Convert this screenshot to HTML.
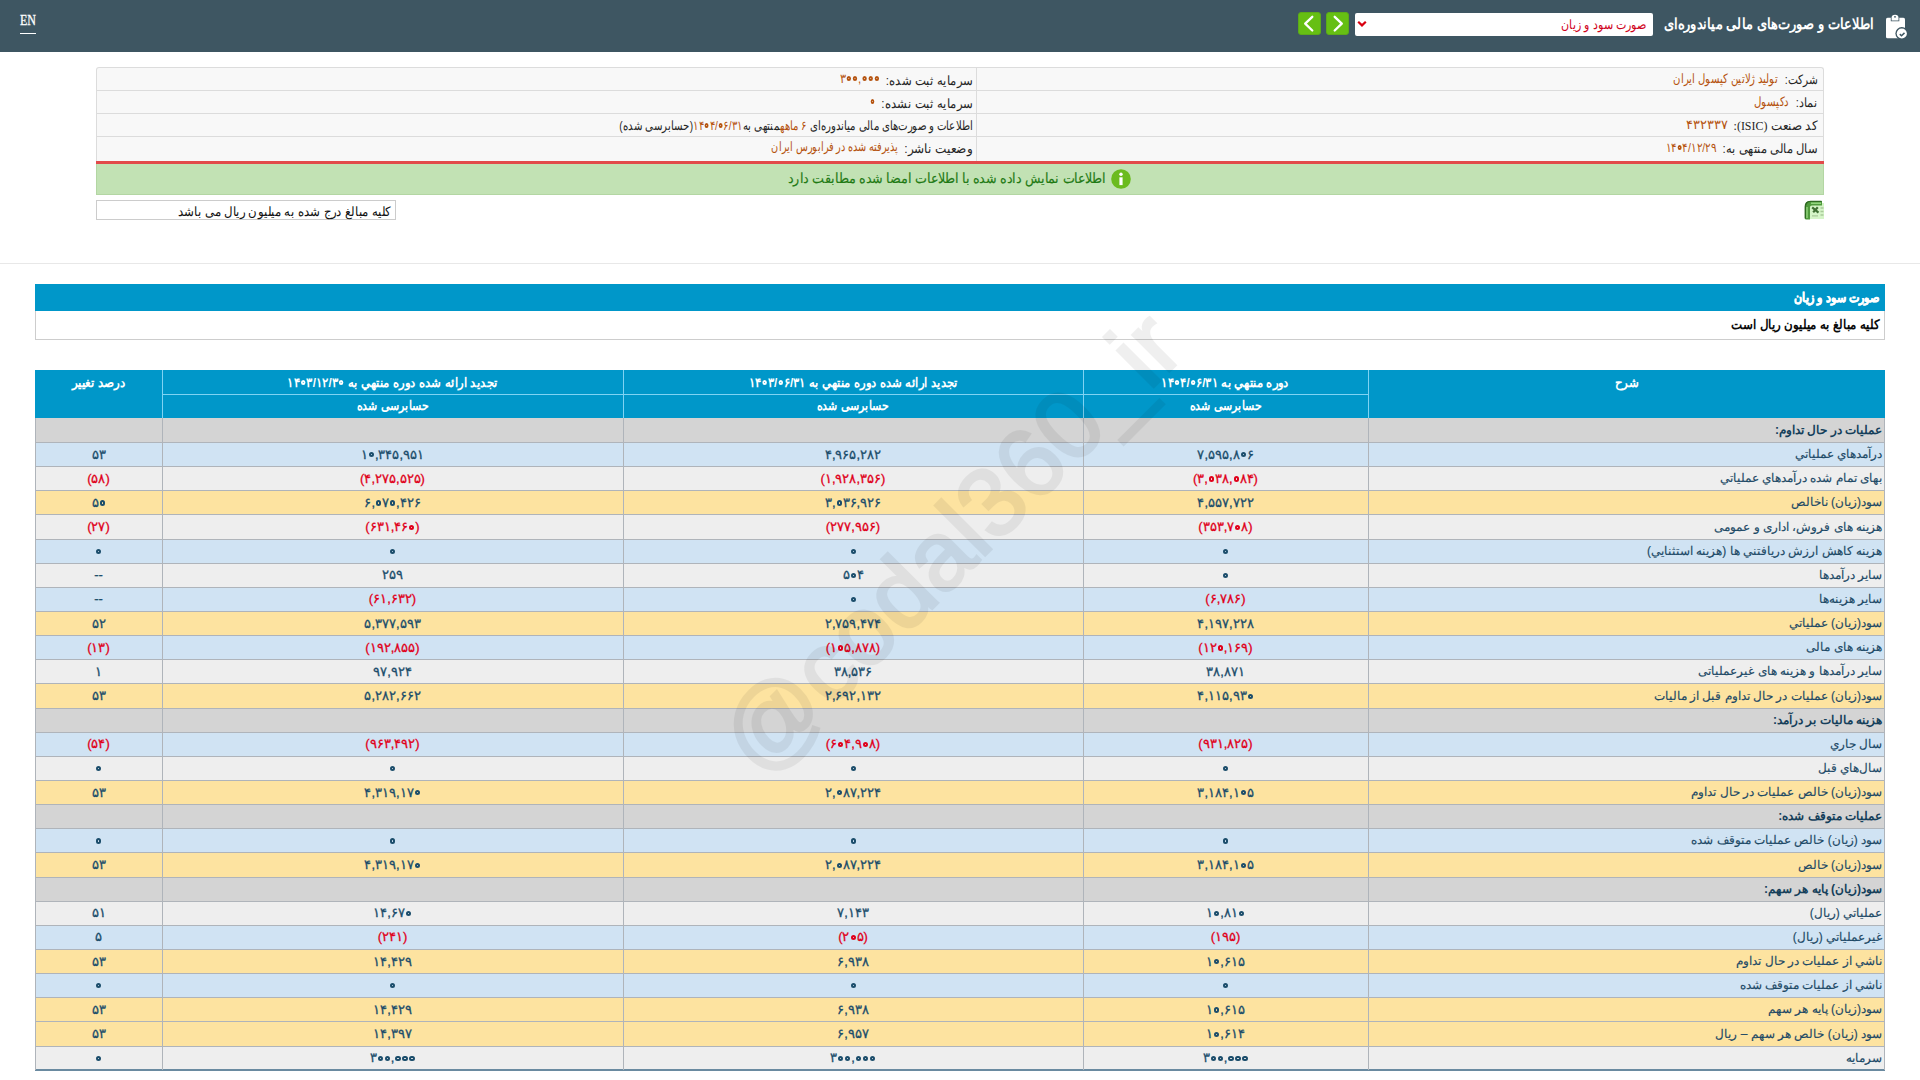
<!DOCTYPE html>
<html lang="fa" dir="rtl">
<head>
<meta charset="utf-8">
<style>
*{box-sizing:border-box;margin:0;padding:0}
html,body{width:1920px;height:1080px;overflow:hidden;background:#fff}
body{font-family:"Liberation Sans",sans-serif;font-size:12px;color:#333;position:relative}
.a{position:absolute}
.f{display:inline-block;white-space:nowrap}
.tr{position:absolute;white-space:nowrap;text-align:right}
.tr .f{transform-origin:100% 50%}
.tc{position:absolute;white-space:nowrap;text-align:center}
.tc .f{transform-origin:50% 50%}
.tl{position:absolute;white-space:nowrap;text-align:left;direction:ltr}
.tl .f{transform-origin:0 50%}
.v{color:#b5530f}
.row{position:absolute;left:35px;width:1850px}
.hl{position:absolute;left:35px;width:1850px;height:1px;background:#afb4ba}
.vl{position:absolute;width:1px;background:#afb4ba}
.num{color:#1b4d6b;font-size:13px;line-height:16px;-webkit-text-stroke:0.3px #1b4d6b}
.nb{unicode-bidi:isolate-override;direction:ltr}
.z{display:inline-block;width:7px;height:16px;position:relative;vertical-align:top}
.z:after{content:"";position:absolute;left:1px;top:5.6px;width:5.2px;height:5.2px;border:2.1px solid currentColor;border-radius:50%;box-sizing:border-box}
.neg{color:#e0001a;-webkit-text-stroke-color:#e0001a}
.desc{color:#1d4a66;font-size:12px;line-height:16px;-webkit-text-stroke:0.15px #1d4a66}
.sec{color:#153f5a;font-weight:bold;-webkit-text-stroke:0}
</style>
</head>
<body>

<div class="a" style="left:0;top:0;width:1920px;height:52px;background:#3e5662"></div>
<div class="tl" style="left:20px;top:13px;font-family:'Liberation Serif',serif;font-size:14px;line-height:16px;color:#fff;-webkit-text-stroke:0.3px #fff"><span class="f " id="f0" style=";transform:scaleX(0.8569)">EN</span></div>
<div class="a" style="left:20px;top:33px;width:16px;height:1px;background:#fff"></div>
<div class="tr" style="right:46px;top:15px;font-size:15px;line-height:18px;color:#fff;font-weight:bold"><span class="f " id="f1" style=";transform:scaleX(0.8654)">اطلاعات و صورت‌های مالی میاندوره‌ای</span></div>
<svg class="a" style="left:1880px;top:10px" width="30" height="32" viewBox="0 0 30 32">
<rect x="6" y="7.7" width="19" height="20.6" rx="1.6" fill="#fff"/>
<path d="M10.8 11.2V7.5a4.2 3.6 0 0 1 8.5 0v3.7z" fill="#3e5662"/>
<path d="M11.6 10.4V7.6a3.4 2.9 0 0 1 6.9 0v2.8z" fill="#fff"/>
<circle cx="15" cy="6.8" r="0.9" fill="#3e5662"/>
<circle cx="21.8" cy="23.5" r="6.4" fill="#3e5662"/>
<circle cx="21.8" cy="23.5" r="5.1" fill="#fff"/>
<path d="M19.8 24.1l1.7 1.6 3-2.8" stroke="#3e5662" stroke-width="1.5" fill="none"/></svg>
<div class="a" style="left:1355px;top:13px;width:298px;height:23px;background:#fff;border-radius:2px"></div>
<div class="tr" style="right:273px;top:16px;font-size:13px;line-height:17px;color:#d0021b"><span class="f " id="f2" style=";transform:scaleX(0.8528)">صورت سود و زیان</span></div>
<svg class="a" style="left:1357px;top:20px" width="10" height="8" viewBox="0 0 10 8"><path d="M1.2 1.8l3.8 3.6 3.8-3.6" stroke="#d8000f" stroke-width="2.2" fill="none"/></svg>
<div class="a" style="left:1298px;top:12px;width:23px;height:23px;background:#66bf13;border-radius:3px;border:1px solid #5cab18"><svg width="23" height="23" viewBox="0 0 23 23" style="position:absolute;left:-1px;top:-1px"><path d="M14.3 4.8L7.2 11.6l7.1 6.9" stroke="#fff" stroke-width="2.3" fill="none" stroke-linecap="round" stroke-linejoin="round"/></svg></div>
<div class="a" style="left:1326px;top:12px;width:23px;height:23px;background:#66bf13;border-radius:3px;border:1px solid #5cab18"><svg width="23" height="23" viewBox="0 0 23 23" style="position:absolute;left:-1px;top:-1px"><path d="M8.7 4.8l7.1 6.8-7.1 6.9" stroke="#fff" stroke-width="2.3" fill="none" stroke-linecap="round" stroke-linejoin="round"/></svg></div>
<div class="a" style="left:96px;top:67px;width:1728px;height:94px;background:#f8f8f8;border:1px solid #dcdcdc;border-bottom:none;border-radius:3px 3px 0 0"></div>
<div class="a" style="left:97px;top:90px;width:1726px;height:1px;background:#dcdcdc"></div>
<div class="a" style="left:97px;top:113px;width:1726px;height:1px;background:#dcdcdc"></div>
<div class="a" style="left:97px;top:136px;width:1726px;height:1px;background:#dcdcdc"></div>
<div class="a" style="left:976px;top:68px;width:1px;height:93px;background:#dcdcdc"></div>
<div class="tr" style="right:102.5px;top:71px;font-size:13px;line-height:18px;color:#262626"><span class="f " id="f3" style=";transform:scaleX(0.8123)">شرکت:</span></div>
<div class="tr v" style="right:142.0px;top:70px;font-size:13px;line-height:18px"><span class="f " id="f4" style=";transform:scaleX(0.7787)">تولید ژلاتین کپسول ایران</span></div>
<div class="tr" style="right:102.5px;top:94px;font-size:13px;line-height:18px;color:#262626"><span class="f " id="f5" style=";transform:scaleX(0.8585)">نماد:</span></div>
<div class="tr v" style="right:131.0px;top:93px;font-size:13px;line-height:18px"><span class="f " id="f6" style=";transform:scaleX(0.7864)">دکپسول</span></div>
<div class="tr" style="right:102.5px;top:117px;font-size:13px;line-height:18px;color:#262626"><span class="f " id="f7" style=";transform:scaleX(0.9166)">کد صنعت <span style="font-family:Liberation Serif,serif">(ISIC):</span></span></div>
<div class="tr v" style="right:192.5px;top:116px;font-size:13px;line-height:18px"><span class="f " id="f8" style=";transform:scaleX(0.9905)"><span class="nb">۴۳۲۳۳۷</span></span></div>
<div class="tr" style="right:102.5px;top:140px;font-size:13px;line-height:18px;color:#262626"><span class="f " id="f9" style=";transform:scaleX(0.8841)">سال مالی منتهی به:</span></div>
<div class="tr v" style="right:204.0px;top:139px;font-size:13px;line-height:18px"><span class="f " id="f10" style=";transform:scaleX(0.8002)"><span class="nb">۱۴<i class="z"></i>۴/۱۲/۲۹</span></span></div>
<div class="tr" style="right:947.5px;top:72px;font-size:13px;line-height:18px;color:#262626"><span class="f " id="f11" style=";transform:scaleX(0.8984)">سرمایه ثبت شده:</span></div>
<div class="tr v" style="right:1040.5px;top:70px;font-size:13px;line-height:18px"><span class="f " id="f12" style=";transform:scaleX(0.8767)"><span class="nb">۳<i class="z"></i><i class="z"></i>,<i class="z"></i><i class="z"></i><i class="z"></i></span></span></div>
<div class="tr" style="right:947.5px;top:95px;font-size:13px;line-height:18px;color:#262626"><span class="f " id="f13" style=";transform:scaleX(0.8984)">سرمایه ثبت نشده:</span></div>
<div class="tr v" style="right:1045.0px;top:93px;font-size:13px;line-height:18px"><span class="f " id="f14" style=";transform:scaleX(0.7143)"><span class="nb"><i class="z"></i></span></span></div>
<div class="tr" style="right:947.5px;top:140px;font-size:13px;line-height:18px;color:#262626"><span class="f " id="f15" style=";transform:scaleX(0.9285)">وضعیت ناشر:</span></div>
<div class="tr v" style="right:1021.5px;top:138px;font-size:13px;line-height:18px"><span class="f " id="f16" style=";transform:scaleX(0.7495)">پذیرفته شده در فرابورس ایران</span></div>
<div class="tr" style="right:947.5px;top:117px;font-size:13px;line-height:18px;color:#262626"><span class="f " id="f17" style=";transform:scaleX(0.7824)">اطلاعات و صورت‌های مالی میاندوره‌ای <span class="v"><span class="nb">۶</span> ماهه</span>منتهی به<span class="v"><span class="nb">۱۴<i class="z"></i>۴/<i class="z"></i>۶/۳۱</span></span>(حسابرسی شده)</span></div>
<div class="a" style="left:96px;top:161px;width:1728px;height:3px;background:#e24a4a"></div>
<div class="a" style="left:96px;top:164px;width:1728px;height:31px;background:#c2e2b4;border:1px solid #b3d6a3;border-top:none"></div>
<svg class="a" style="left:1111px;top:169px" width="20" height="20" viewBox="0 0 20 20"><circle cx="10" cy="10" r="9.8" fill="#6bbb1e"/><circle cx="10" cy="5.3" r="1.7" fill="#fff"/><path d="M8.4 8.3h3.2v7.8H8.4z" fill="#fff"/></svg>
<div class="tr" style="right:814px;top:169px;font-size:14px;line-height:18px;color:#1f7a14;-webkit-text-stroke:0.15px #1f7a14"><span class="f " id="f18" style=";transform:scaleX(0.9059)">اطلاعات نمایش داده شده با اطلاعات امضا شده مطابقت دارد</span></div>
<div class="a" style="left:96px;top:200px;width:300px;height:20px;background:#fff;border:1px solid #cccccc"></div>
<div class="tr" style="right:1529.5px;top:203.5px;font-size:13px;line-height:16px;color:#111"><span class="f " id="f19" style=";transform:scaleX(0.9067)">کلیه مبالغ درج شده به میلیون ریال می باشد</span></div>
<svg class="a" style="left:1804px;top:200px" width="20" height="20" viewBox="0 0 20 20">
<rect x="3" y="3" width="17" height="16" fill="#d6f5c8"/>
<path d="M1 19V6.5C1 3 3 1 6.5 1H18v4.5H8C6.8 5.5 6 6.3 6 7.5V19.5H2.5C1.5 19.5 1 19 1 19z" fill="#4f9a3c"/>
<path d="M1.3 18.5V6.8C1.3 3.6 3.2 1.4 6.5 1.4H17.5" stroke="#2f6a22" stroke-width="1.4" fill="none"/>
<path d="M3 7v11" stroke="#8fd27a" stroke-width="1.5"/><path d="M7 3.2h10" stroke="#9fe08a" stroke-width="1.3"/>
<path d="M8.2 7.4l6.3 5.2M13.8 7.2l-4.6 5" stroke="#3f6f33" stroke-width="2.2"/>
<path d="M16.5 8h3M16.5 11.5h3M16.5 15h3M8 15.8h6" stroke="#a9c99a" stroke-width="1.3"/>
</svg>
<div class="a" style="left:0;top:263px;width:1920px;height:1px;background:#e8e8e8"></div>
<div class="a" style="left:35px;top:284px;width:1850px;height:27px;background:#0097c9"></div>
<div class="a" style="left:35px;top:311px;width:1850px;height:29px;background:#fff;border:1px solid #cdcdcd;border-top:none"></div>
<div class="tr" style="right:40px;top:290px;font-size:13px;line-height:16px;color:#fff;font-weight:bold;-webkit-text-stroke:0.5px #fff"><span class="f " id="f20" style=";transform:scaleX(0.8528)">صورت سود و زیان</span></div>
<div class="tr" style="right:41px;top:317px;font-size:13px;line-height:16px;color:#0a0a0a;font-weight:bold"><span class="f " id="f21" style=";transform:scaleX(0.9076)">کلیه مبالغ به میلیون ریال است</span></div>
<div class="a" style="left:35px;top:370px;width:1850px;height:48px;background:#0097c9"></div>
<div class="a" style="left:163px;top:394px;width:1205px;height:1px;background:#7fd3f3"></div>
<div class="a" style="left:162px;top:370px;width:1px;height:48px;background:#7fd3f3"></div>
<div class="a" style="left:623px;top:370px;width:1px;height:48px;background:#7fd3f3"></div>
<div class="a" style="left:1083px;top:370px;width:1px;height:48px;background:#7fd3f3"></div>
<div class="a" style="left:1368px;top:370px;width:1px;height:48px;background:#7fd3f3"></div>
<div class="tc" style="left:1368px;width:517px;top:374.5px;font-size:13px;line-height:16px;color:#fff;font-weight:bold"><span class="f " id="f22" style=";transform:scaleX(0.9038)">شرح</span></div>
<div class="tc" style="left:1083px;width:285px;top:374.5px;font-size:13px;line-height:16px;color:#fff;font-weight:bold"><span class="f " id="f23" style=";transform:scaleX(0.8973)">دوره منتهي به <span class="nb">۱۴<i class="z"></i>۴/<i class="z"></i>۶/۳۱</span></span></div>
<div class="tc" style="left:623px;width:460px;top:374.5px;font-size:13px;line-height:16px;color:#fff;font-weight:bold"><span class="f " id="f24" style=";transform:scaleX(0.8973)">تجديد ارائه شده دوره منتهي به <span class="nb">۱۴<i class="z"></i>۳/<i class="z"></i>۶/۳۱</span></span></div>
<div class="tc" style="left:162px;width:461px;top:374.5px;font-size:13px;line-height:16px;color:#fff;font-weight:bold"><span class="f " id="f25" style=";transform:scaleX(0.9017)">تجديد ارائه شده دوره منتهي به <span class="nb">۱۴<i class="z"></i>۳/۱۲/۳<i class="z"></i></span></span></div>
<div class="tc" style="left:35px;width:127px;top:374.5px;font-size:13px;line-height:16px;color:#fff;font-weight:bold"><span class="f " id="f26" style=";transform:scaleX(0.9126)">درصد تغيير</span></div>
<div class="tc" style="left:1083px;width:285px;top:398px;font-size:13px;line-height:16px;color:#fff;font-weight:bold"><span class="f " id="f27" style=";transform:scaleX(0.8467)">حسابرسی شده</span></div>
<div class="tc" style="left:623px;width:460px;top:398px;font-size:13px;line-height:16px;color:#fff;font-weight:bold"><span class="f " id="f28" style=";transform:scaleX(0.8467)">حسابرسی شده</span></div>
<div class="tc" style="left:162px;width:461px;top:398px;font-size:13px;line-height:16px;color:#fff;font-weight:bold"><span class="f " id="f29" style=";transform:scaleX(0.8467)">حسابرسی شده</span></div>
<div class="row" style="top:418.40px;height:24.14px;background:#d4d4d4"></div>
<div class="row" style="top:442.54px;height:24.14px;background:#d0e3f3"></div>
<div class="row" style="top:466.68px;height:24.14px;background:#eeeeee"></div>
<div class="row" style="top:490.82px;height:24.14px;background:#fde3a0"></div>
<div class="row" style="top:514.96px;height:24.14px;background:#eeeeee"></div>
<div class="row" style="top:539.10px;height:24.14px;background:#d0e3f3"></div>
<div class="row" style="top:563.24px;height:24.14px;background:#eeeeee"></div>
<div class="row" style="top:587.38px;height:24.14px;background:#d0e3f3"></div>
<div class="row" style="top:611.52px;height:24.14px;background:#fde3a0"></div>
<div class="row" style="top:635.66px;height:24.14px;background:#d0e3f3"></div>
<div class="row" style="top:659.80px;height:24.14px;background:#eeeeee"></div>
<div class="row" style="top:683.94px;height:24.14px;background:#fde3a0"></div>
<div class="row" style="top:708.08px;height:24.14px;background:#d4d4d4"></div>
<div class="row" style="top:732.22px;height:24.14px;background:#d0e3f3"></div>
<div class="row" style="top:756.36px;height:24.14px;background:#eeeeee"></div>
<div class="row" style="top:780.50px;height:24.14px;background:#fde3a0"></div>
<div class="row" style="top:804.64px;height:24.14px;background:#d4d4d4"></div>
<div class="row" style="top:828.78px;height:24.14px;background:#d0e3f3"></div>
<div class="row" style="top:852.92px;height:24.14px;background:#fde3a0"></div>
<div class="row" style="top:877.06px;height:24.14px;background:#d4d4d4"></div>
<div class="row" style="top:901.20px;height:24.14px;background:#eeeeee"></div>
<div class="row" style="top:925.34px;height:24.14px;background:#d0e3f3"></div>
<div class="row" style="top:949.48px;height:24.14px;background:#fde3a0"></div>
<div class="row" style="top:973.62px;height:24.14px;background:#d0e3f3"></div>
<div class="row" style="top:997.76px;height:24.14px;background:#fde3a0"></div>
<div class="row" style="top:1021.90px;height:24.14px;background:#fde3a0"></div>
<div class="row" style="top:1046.04px;height:24.14px;background:#eeeeee"></div>
<div class="hl" style="top:442.04px"></div>
<div class="hl" style="top:466.18px"></div>
<div class="hl" style="top:490.32px"></div>
<div class="hl" style="top:514.46px"></div>
<div class="hl" style="top:538.60px"></div>
<div class="hl" style="top:562.74px"></div>
<div class="hl" style="top:586.88px"></div>
<div class="hl" style="top:611.02px"></div>
<div class="hl" style="top:635.16px"></div>
<div class="hl" style="top:659.30px"></div>
<div class="hl" style="top:683.44px"></div>
<div class="hl" style="top:707.58px"></div>
<div class="hl" style="top:731.72px"></div>
<div class="hl" style="top:755.86px"></div>
<div class="hl" style="top:780.00px"></div>
<div class="hl" style="top:804.14px"></div>
<div class="hl" style="top:828.28px"></div>
<div class="hl" style="top:852.42px"></div>
<div class="hl" style="top:876.56px"></div>
<div class="hl" style="top:900.70px"></div>
<div class="hl" style="top:924.84px"></div>
<div class="hl" style="top:948.98px"></div>
<div class="hl" style="top:973.12px"></div>
<div class="hl" style="top:997.26px"></div>
<div class="hl" style="top:1021.40px"></div>
<div class="hl" style="top:1045.54px"></div>
<div class="hl" style="top:1069.68px"></div>
<div class="a" style="left:35px;top:1069.18px;width:1850px;height:2px;background:#6a8aa0"></div>
<div class="vl" style="left:35px;top:418px;height:652.18px"></div>
<div class="vl" style="left:162px;top:418px;height:652.18px"></div>
<div class="vl" style="left:623px;top:418px;height:652.18px"></div>
<div class="vl" style="left:1083px;top:418px;height:652.18px"></div>
<div class="vl" style="left:1368px;top:418px;height:652.18px"></div>
<div class="vl" style="left:1884px;top:418px;height:652.18px"></div>
<div class="tr desc sec" style="right:38px;top:422.07px"><span class="f " id="f30" style="">عملیات در حال تداوم:</span></div>
<div class="tr desc" style="right:38px;top:446.21px"><span class="f " id="f31" style="">درآمدهاي عملياتي</span></div>
<div class="tc num" style="left:1083px;width:285px;top:446.61px"><span class="f " id="f32" style=""><span class="nb">۷,۵۹۵,۸<i class="z"></i>۶</span></span></div>
<div class="tc num" style="left:623px;width:460px;top:446.61px"><span class="f " id="f33" style=""><span class="nb">۴,۹۶۵,۲۸۲</span></span></div>
<div class="tc num" style="left:162px;width:461px;top:446.61px"><span class="f " id="f34" style=""><span class="nb">۱<i class="z"></i>,۳۴۵,۹۵۱</span></span></div>
<div class="tc num" style="left:35px;width:127px;top:446.61px"><span class="f " id="f35" style=""><span class="nb">۵۳</span></span></div>
<div class="tr desc" style="right:38px;top:470.35px"><span class="f " id="f36" style="">بهای تمام شده درآمدهاي عملياتي</span></div>
<div class="tc num neg" style="left:1083px;width:285px;top:470.75px"><span class="f " id="f37" style=""><span class="nb">(۳,<i class="z"></i>۳۸,<i class="z"></i>۸۴)</span></span></div>
<div class="tc num neg" style="left:623px;width:460px;top:470.75px"><span class="f " id="f38" style=""><span class="nb">(۱,۹۲۸,۳۵۶)</span></span></div>
<div class="tc num neg" style="left:162px;width:461px;top:470.75px"><span class="f " id="f39" style=""><span class="nb">(۴,۲۷۵,۵۲۵)</span></span></div>
<div class="tc num neg" style="left:35px;width:127px;top:470.75px"><span class="f " id="f40" style=""><span class="nb">(۵۸)</span></span></div>
<div class="tr desc" style="right:38px;top:494.49px"><span class="f " id="f41" style="">سود(زيان) ناخالص</span></div>
<div class="tc num" style="left:1083px;width:285px;top:494.89px"><span class="f " id="f42" style=""><span class="nb">۴,۵۵۷,۷۲۲</span></span></div>
<div class="tc num" style="left:623px;width:460px;top:494.89px"><span class="f " id="f43" style=""><span class="nb">۳,<i class="z"></i>۳۶,۹۲۶</span></span></div>
<div class="tc num" style="left:162px;width:461px;top:494.89px"><span class="f " id="f44" style=""><span class="nb">۶,<i class="z"></i>۷<i class="z"></i>,۴۲۶</span></span></div>
<div class="tc num" style="left:35px;width:127px;top:494.89px"><span class="f " id="f45" style=""><span class="nb">۵<i class="z"></i></span></span></div>
<div class="tr desc" style="right:38px;top:518.63px"><span class="f " id="f46" style="">هزينه هاى فروش، اداری و عمومی</span></div>
<div class="tc num neg" style="left:1083px;width:285px;top:519.03px"><span class="f " id="f47" style=""><span class="nb">(۳۵۳,۷<i class="z"></i>۸)</span></span></div>
<div class="tc num neg" style="left:623px;width:460px;top:519.03px"><span class="f " id="f48" style=""><span class="nb">(۲۷۷,۹۵۶)</span></span></div>
<div class="tc num neg" style="left:162px;width:461px;top:519.03px"><span class="f " id="f49" style=""><span class="nb">(۶۳۱,۴۶<i class="z"></i>)</span></span></div>
<div class="tc num neg" style="left:35px;width:127px;top:519.03px"><span class="f " id="f50" style=""><span class="nb">(۲۷)</span></span></div>
<div class="tr desc" style="right:38px;top:542.77px"><span class="f " id="f51" style="">هزينه كاهش ارزش دريافتني ها (هزينه استثنايي)</span></div>
<div class="tc num" style="left:1083px;width:285px;top:543.17px"><span class="f " id="f52" style=""><span class="nb"><i class="z"></i></span></span></div>
<div class="tc num" style="left:623px;width:460px;top:543.17px"><span class="f " id="f53" style=""><span class="nb"><i class="z"></i></span></span></div>
<div class="tc num" style="left:162px;width:461px;top:543.17px"><span class="f " id="f54" style=""><span class="nb"><i class="z"></i></span></span></div>
<div class="tc num" style="left:35px;width:127px;top:543.17px"><span class="f " id="f55" style=""><span class="nb"><i class="z"></i></span></span></div>
<div class="tr desc" style="right:38px;top:566.91px"><span class="f " id="f56" style="">ساير درآمدها</span></div>
<div class="tc num" style="left:1083px;width:285px;top:567.31px"><span class="f " id="f57" style=""><span class="nb"><i class="z"></i></span></span></div>
<div class="tc num" style="left:623px;width:460px;top:567.31px"><span class="f " id="f58" style=""><span class="nb">۵<i class="z"></i>۴</span></span></div>
<div class="tc num" style="left:162px;width:461px;top:567.31px"><span class="f " id="f59" style=""><span class="nb">۲۵۹</span></span></div>
<div class="tc num" style="left:35px;width:127px;top:567.31px"><span class="f " id="f60" style=""><span class="nb">--</span></span></div>
<div class="tr desc" style="right:38px;top:591.05px"><span class="f " id="f61" style="">ساير هزينه‌ها</span></div>
<div class="tc num neg" style="left:1083px;width:285px;top:591.45px"><span class="f " id="f62" style=""><span class="nb">(۶,۷۸۶)</span></span></div>
<div class="tc num" style="left:623px;width:460px;top:591.45px"><span class="f " id="f63" style=""><span class="nb"><i class="z"></i></span></span></div>
<div class="tc num neg" style="left:162px;width:461px;top:591.45px"><span class="f " id="f64" style=""><span class="nb">(۶۱,۶۳۲)</span></span></div>
<div class="tc num" style="left:35px;width:127px;top:591.45px"><span class="f " id="f65" style=""><span class="nb">--</span></span></div>
<div class="tr desc" style="right:38px;top:615.19px"><span class="f " id="f66" style="">سود(زيان) عملياتي</span></div>
<div class="tc num" style="left:1083px;width:285px;top:615.59px"><span class="f " id="f67" style=""><span class="nb">۴,۱۹۷,۲۲۸</span></span></div>
<div class="tc num" style="left:623px;width:460px;top:615.59px"><span class="f " id="f68" style=""><span class="nb">۲,۷۵۹,۴۷۴</span></span></div>
<div class="tc num" style="left:162px;width:461px;top:615.59px"><span class="f " id="f69" style=""><span class="nb">۵,۳۷۷,۵۹۳</span></span></div>
<div class="tc num" style="left:35px;width:127px;top:615.59px"><span class="f " id="f70" style=""><span class="nb">۵۲</span></span></div>
<div class="tr desc" style="right:38px;top:639.33px"><span class="f " id="f71" style="">هزينه هاى مالى</span></div>
<div class="tc num neg" style="left:1083px;width:285px;top:639.73px"><span class="f " id="f72" style=""><span class="nb">(۱۲<i class="z"></i>,۱۶۹)</span></span></div>
<div class="tc num neg" style="left:623px;width:460px;top:639.73px"><span class="f " id="f73" style=""><span class="nb">(۱<i class="z"></i>۵,۸۷۸)</span></span></div>
<div class="tc num neg" style="left:162px;width:461px;top:639.73px"><span class="f " id="f74" style=""><span class="nb">(۱۹۲,۸۵۵)</span></span></div>
<div class="tc num neg" style="left:35px;width:127px;top:639.73px"><span class="f " id="f75" style=""><span class="nb">(۱۳)</span></span></div>
<div class="tr desc" style="right:38px;top:663.47px"><span class="f " id="f76" style="">ساير درآمدها و هزينه هاى غيرعملياتى</span></div>
<div class="tc num" style="left:1083px;width:285px;top:663.87px"><span class="f " id="f77" style=""><span class="nb">۳۸,۸۷۱</span></span></div>
<div class="tc num" style="left:623px;width:460px;top:663.87px"><span class="f " id="f78" style=""><span class="nb">۳۸,۵۳۶</span></span></div>
<div class="tc num" style="left:162px;width:461px;top:663.87px"><span class="f " id="f79" style=""><span class="nb">۹۷,۹۲۴</span></span></div>
<div class="tc num" style="left:35px;width:127px;top:663.87px"><span class="f " id="f80" style=""><span class="nb">۱</span></span></div>
<div class="tr desc" style="right:38px;top:687.61px"><span class="f " id="f81" style="">سود(زيان) عمليات در حال تداوم قبل از ماليات</span></div>
<div class="tc num" style="left:1083px;width:285px;top:688.01px"><span class="f " id="f82" style=""><span class="nb">۴,۱۱۵,۹۳<i class="z"></i></span></span></div>
<div class="tc num" style="left:623px;width:460px;top:688.01px"><span class="f " id="f83" style=""><span class="nb">۲,۶۹۲,۱۳۲</span></span></div>
<div class="tc num" style="left:162px;width:461px;top:688.01px"><span class="f " id="f84" style=""><span class="nb">۵,۲۸۲,۶۶۲</span></span></div>
<div class="tc num" style="left:35px;width:127px;top:688.01px"><span class="f " id="f85" style=""><span class="nb">۵۳</span></span></div>
<div class="tr desc sec" style="right:38px;top:711.75px"><span class="f " id="f86" style="">هزينه ماليات بر درآمد:</span></div>
<div class="tr desc" style="right:38px;top:735.89px"><span class="f " id="f87" style="">سال جاري</span></div>
<div class="tc num neg" style="left:1083px;width:285px;top:736.29px"><span class="f " id="f88" style=""><span class="nb">(۹۳۱,۸۲۵)</span></span></div>
<div class="tc num neg" style="left:623px;width:460px;top:736.29px"><span class="f " id="f89" style=""><span class="nb">(۶<i class="z"></i>۴,۹<i class="z"></i>۸)</span></span></div>
<div class="tc num neg" style="left:162px;width:461px;top:736.29px"><span class="f " id="f90" style=""><span class="nb">(۹۶۳,۴۹۲)</span></span></div>
<div class="tc num neg" style="left:35px;width:127px;top:736.29px"><span class="f " id="f91" style=""><span class="nb">(۵۴)</span></span></div>
<div class="tr desc" style="right:38px;top:760.03px"><span class="f " id="f92" style="">سال‌هاي قبل</span></div>
<div class="tc num" style="left:1083px;width:285px;top:760.43px"><span class="f " id="f93" style=""><span class="nb"><i class="z"></i></span></span></div>
<div class="tc num" style="left:623px;width:460px;top:760.43px"><span class="f " id="f94" style=""><span class="nb"><i class="z"></i></span></span></div>
<div class="tc num" style="left:162px;width:461px;top:760.43px"><span class="f " id="f95" style=""><span class="nb"><i class="z"></i></span></span></div>
<div class="tc num" style="left:35px;width:127px;top:760.43px"><span class="f " id="f96" style=""><span class="nb"><i class="z"></i></span></span></div>
<div class="tr desc" style="right:38px;top:784.17px"><span class="f " id="f97" style="">سود(زيان) خالص عمليات در حال تداوم</span></div>
<div class="tc num" style="left:1083px;width:285px;top:784.57px"><span class="f " id="f98" style=""><span class="nb">۳,۱۸۴,۱<i class="z"></i>۵</span></span></div>
<div class="tc num" style="left:623px;width:460px;top:784.57px"><span class="f " id="f99" style=""><span class="nb">۲,<i class="z"></i>۸۷,۲۲۴</span></span></div>
<div class="tc num" style="left:162px;width:461px;top:784.57px"><span class="f " id="f100" style=""><span class="nb">۴,۳۱۹,۱۷<i class="z"></i></span></span></div>
<div class="tc num" style="left:35px;width:127px;top:784.57px"><span class="f " id="f101" style=""><span class="nb">۵۳</span></span></div>
<div class="tr desc sec" style="right:38px;top:808.31px"><span class="f " id="f102" style="">عمليات متوقف شده:</span></div>
<div class="tr desc" style="right:38px;top:832.45px"><span class="f " id="f103" style="">سود (زيان) خالص عمليات متوقف شده</span></div>
<div class="tc num" style="left:1083px;width:285px;top:832.85px"><span class="f " id="f104" style=""><span class="nb"><i class="z"></i></span></span></div>
<div class="tc num" style="left:623px;width:460px;top:832.85px"><span class="f " id="f105" style=""><span class="nb"><i class="z"></i></span></span></div>
<div class="tc num" style="left:162px;width:461px;top:832.85px"><span class="f " id="f106" style=""><span class="nb"><i class="z"></i></span></span></div>
<div class="tc num" style="left:35px;width:127px;top:832.85px"><span class="f " id="f107" style=""><span class="nb"><i class="z"></i></span></span></div>
<div class="tr desc" style="right:38px;top:856.59px"><span class="f " id="f108" style="">سود(زيان) خالص</span></div>
<div class="tc num" style="left:1083px;width:285px;top:856.99px"><span class="f " id="f109" style=""><span class="nb">۳,۱۸۴,۱<i class="z"></i>۵</span></span></div>
<div class="tc num" style="left:623px;width:460px;top:856.99px"><span class="f " id="f110" style=""><span class="nb">۲,<i class="z"></i>۸۷,۲۲۴</span></span></div>
<div class="tc num" style="left:162px;width:461px;top:856.99px"><span class="f " id="f111" style=""><span class="nb">۴,۳۱۹,۱۷<i class="z"></i></span></span></div>
<div class="tc num" style="left:35px;width:127px;top:856.99px"><span class="f " id="f112" style=""><span class="nb">۵۳</span></span></div>
<div class="tr desc sec" style="right:38px;top:880.73px"><span class="f " id="f113" style="">سود(زيان) پايه هر سهم:</span></div>
<div class="tr desc" style="right:38px;top:904.87px"><span class="f " id="f114" style="">عملياتي (ريال)</span></div>
<div class="tc num" style="left:1083px;width:285px;top:905.27px"><span class="f " id="f115" style=""><span class="nb">۱<i class="z"></i>,۸۱<i class="z"></i></span></span></div>
<div class="tc num" style="left:623px;width:460px;top:905.27px"><span class="f " id="f116" style=""><span class="nb">۷,۱۴۳</span></span></div>
<div class="tc num" style="left:162px;width:461px;top:905.27px"><span class="f " id="f117" style=""><span class="nb">۱۴,۶۷<i class="z"></i></span></span></div>
<div class="tc num" style="left:35px;width:127px;top:905.27px"><span class="f " id="f118" style=""><span class="nb">۵۱</span></span></div>
<div class="tr desc" style="right:38px;top:929.01px"><span class="f " id="f119" style="">غيرعملياتي (ريال)</span></div>
<div class="tc num neg" style="left:1083px;width:285px;top:929.41px"><span class="f " id="f120" style=""><span class="nb">(۱۹۵)</span></span></div>
<div class="tc num neg" style="left:623px;width:460px;top:929.41px"><span class="f " id="f121" style=""><span class="nb">(۲<i class="z"></i>۵)</span></span></div>
<div class="tc num neg" style="left:162px;width:461px;top:929.41px"><span class="f " id="f122" style=""><span class="nb">(۲۴۱)</span></span></div>
<div class="tc num" style="left:35px;width:127px;top:929.41px"><span class="f " id="f123" style=""><span class="nb">۵</span></span></div>
<div class="tr desc" style="right:38px;top:953.15px"><span class="f " id="f124" style="">ناشي از عمليات در حال تداوم</span></div>
<div class="tc num" style="left:1083px;width:285px;top:953.55px"><span class="f " id="f125" style=""><span class="nb">۱<i class="z"></i>,۶۱۵</span></span></div>
<div class="tc num" style="left:623px;width:460px;top:953.55px"><span class="f " id="f126" style=""><span class="nb">۶,۹۳۸</span></span></div>
<div class="tc num" style="left:162px;width:461px;top:953.55px"><span class="f " id="f127" style=""><span class="nb">۱۴,۴۲۹</span></span></div>
<div class="tc num" style="left:35px;width:127px;top:953.55px"><span class="f " id="f128" style=""><span class="nb">۵۳</span></span></div>
<div class="tr desc" style="right:38px;top:977.29px"><span class="f " id="f129" style="">ناشي از عمليات متوقف شده</span></div>
<div class="tc num" style="left:1083px;width:285px;top:977.69px"><span class="f " id="f130" style=""><span class="nb"><i class="z"></i></span></span></div>
<div class="tc num" style="left:623px;width:460px;top:977.69px"><span class="f " id="f131" style=""><span class="nb"><i class="z"></i></span></span></div>
<div class="tc num" style="left:162px;width:461px;top:977.69px"><span class="f " id="f132" style=""><span class="nb"><i class="z"></i></span></span></div>
<div class="tc num" style="left:35px;width:127px;top:977.69px"><span class="f " id="f133" style=""><span class="nb"><i class="z"></i></span></span></div>
<div class="tr desc" style="right:38px;top:1001.43px"><span class="f " id="f134" style="">سود(زيان) پايه هر سهم</span></div>
<div class="tc num" style="left:1083px;width:285px;top:1001.83px"><span class="f " id="f135" style=""><span class="nb">۱<i class="z"></i>,۶۱۵</span></span></div>
<div class="tc num" style="left:623px;width:460px;top:1001.83px"><span class="f " id="f136" style=""><span class="nb">۶,۹۳۸</span></span></div>
<div class="tc num" style="left:162px;width:461px;top:1001.83px"><span class="f " id="f137" style=""><span class="nb">۱۴,۴۲۹</span></span></div>
<div class="tc num" style="left:35px;width:127px;top:1001.83px"><span class="f " id="f138" style=""><span class="nb">۵۳</span></span></div>
<div class="tr desc" style="right:38px;top:1025.57px"><span class="f " id="f139" style="">سود (زيان) خالص هر سهم – ريال</span></div>
<div class="tc num" style="left:1083px;width:285px;top:1025.97px"><span class="f " id="f140" style=""><span class="nb">۱<i class="z"></i>,۶۱۴</span></span></div>
<div class="tc num" style="left:623px;width:460px;top:1025.97px"><span class="f " id="f141" style=""><span class="nb">۶,۹۵۷</span></span></div>
<div class="tc num" style="left:162px;width:461px;top:1025.97px"><span class="f " id="f142" style=""><span class="nb">۱۴,۳۹۷</span></span></div>
<div class="tc num" style="left:35px;width:127px;top:1025.97px"><span class="f " id="f143" style=""><span class="nb">۵۳</span></span></div>
<div class="tr desc" style="right:38px;top:1049.71px"><span class="f " id="f144" style="">سرمايه</span></div>
<div class="tc num" style="left:1083px;width:285px;top:1050.11px"><span class="f " id="f145" style=""><span class="nb">۳<i class="z"></i><i class="z"></i>,<i class="z"></i><i class="z"></i><i class="z"></i></span></span></div>
<div class="tc num" style="left:623px;width:460px;top:1050.11px"><span class="f " id="f146" style=""><span class="nb">۳<i class="z"></i><i class="z"></i>,<i class="z"></i><i class="z"></i><i class="z"></i></span></span></div>
<div class="tc num" style="left:162px;width:461px;top:1050.11px"><span class="f " id="f147" style=""><span class="nb">۳<i class="z"></i><i class="z"></i>,<i class="z"></i><i class="z"></i><i class="z"></i></span></span></div>
<div class="tc num" style="left:35px;width:127px;top:1050.11px"><span class="f " id="f148" style=""><span class="nb"><i class="z"></i></span></span></div>
<div class="a" style="left:351px;top:483px;width:1200px;height:120px;transform:rotate(-45deg);text-align:center;font-size:97.5px;font-weight:normal;color:#000;-webkit-text-stroke:2.8px #000;opacity:0.058;white-space:nowrap;direction:ltr;line-height:120px">@codal360_ir</div>
</body></html>
